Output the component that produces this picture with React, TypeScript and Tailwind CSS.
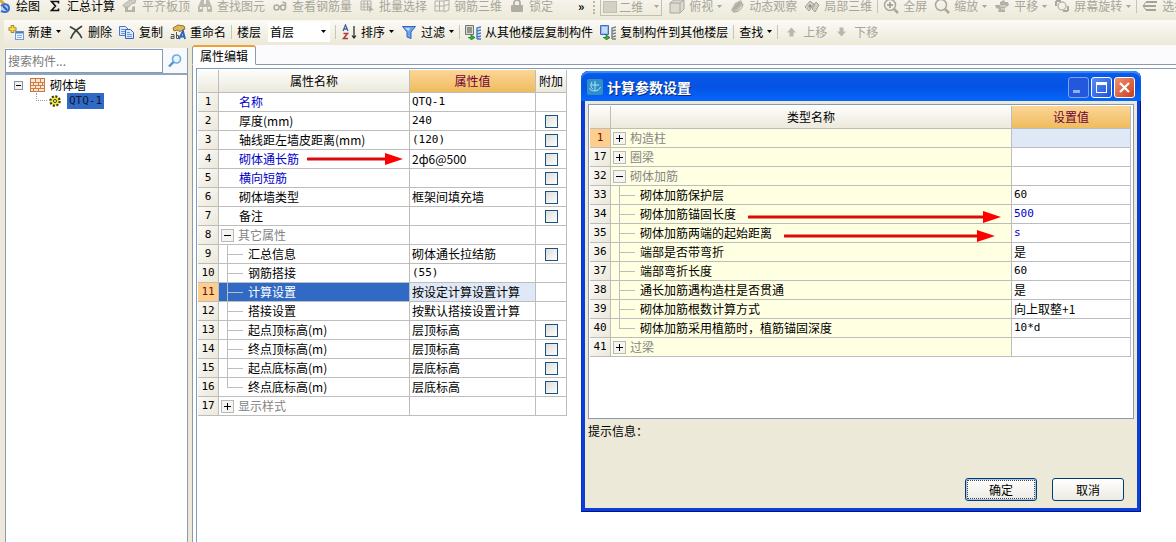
import { useState, type ReactNode } from 'react'
import clsx from 'clsx'

/* ---------- Types & data ---------- */

type PropertyRow = {
  no: number
  label: string
  value?: string
  tone?: 'link' | 'group'
  toggle?: 'open' | 'closed'
  branch?: 'mid' | 'last'
  check?: boolean
  selected?: boolean
  arrow?: number
}

const PROPERTIES: PropertyRow[] = [
  { no: 1, label: '名称', value: 'QTQ-1', tone: 'link' },
  { no: 2, label: '厚度(mm)', value: '240', check: true },
  { no: 3, label: '轴线距左墙皮距离(mm)', value: '(120)', check: true },
  { no: 4, label: '砌体通长筋', value: '2ф6@500', tone: 'link', check: true, arrow: 96 },
  { no: 5, label: '横向短筋', tone: 'link', check: true },
  { no: 6, label: '砌体墙类型', value: '框架间填充墙', check: true },
  { no: 7, label: '备注', check: true },
  { no: 8, label: '其它属性', tone: 'group', toggle: 'open' },
  { no: 9, label: '汇总信息', value: '砌体通长拉结筋', branch: 'mid', check: true },
  { no: 10, label: '钢筋搭接', value: '(55)', branch: 'mid' },
  { no: 11, label: '计算设置', value: '按设定计算设置计算', branch: 'mid', selected: true },
  { no: 12, label: '搭接设置', value: '按默认搭接设置计算', branch: 'mid' },
  { no: 13, label: '起点顶标高(m)', value: '层顶标高', branch: 'mid', check: true },
  { no: 14, label: '终点顶标高(m)', value: '层顶标高', branch: 'mid', check: true },
  { no: 15, label: '起点底标高(m)', value: '层底标高', branch: 'mid', check: true },
  { no: 16, label: '终点底标高(m)', value: '层底标高', branch: 'last', check: true },
  { no: 17, label: '显示样式', tone: 'group', toggle: 'closed' },
]

type ParamRow = Omit<PropertyRow, 'check'> & { changed?: boolean }

const PARAMS: ParamRow[] = [
  { no: 1, label: '构造柱', tone: 'group', toggle: 'closed', selected: true },
  { no: 17, label: '圈梁', tone: 'group', toggle: 'closed' },
  { no: 32, label: '砌体加筋', tone: 'group', toggle: 'open' },
  { no: 33, label: '砌体加筋保护层', value: '60', branch: 'mid' },
  { no: 34, label: '砌体加筋锚固长度', value: '500', branch: 'mid', changed: true, arrow: 253 },
  { no: 35, label: '砌体加筋两端的起始距离', value: 's', branch: 'mid', changed: true, arrow: 211 },
  { no: 36, label: '端部是否带弯折', value: '是', branch: 'mid' },
  { no: 37, label: '端部弯折长度', value: '60', branch: 'mid' },
  { no: 38, label: '通长加筋遇构造柱是否贯通', value: '是', branch: 'mid' },
  { no: 39, label: '砌体加筋根数计算方式', value: '向上取整+1', branch: 'mid' },
  { no: 40, label: '砌体加筋采用植筋时，植筋锚固深度', value: '10*d', branch: 'last' },
  { no: 41, label: '过梁', tone: 'group', toggle: 'closed' },
]

// plain ASCII values use the narrow fixed-width face
const isAscii = (s: string) => /^[\x20-\x7e]*$/.test(s)
const MONO = "font-['DejaVu_Sans_Mono',monospace] text-[11px]"

/* ---------- Icons ---------- */

function Icon({ children, className }: { children: ReactNode; className?: string }) {
  return (
    <svg viewBox="0 0 16 16" aria-hidden="true" className={clsx('size-4 shrink-0', className)} fill="none">
      {children}
    </svg>
  )
}

const DrawIcon = () => (
  <Icon>
    <path d="M4 2l7 7" stroke="#d9ab3a" strokeWidth="3" />
    <path d="M5 8c3-3 8-2 8 2s-4 5-8 3" fill="#b9d2f5" stroke="#3a6fc9" strokeWidth="2" />
    <path d="M7 8l4 4" stroke="#2d58a8" strokeWidth="2" />
  </Icon>
)
const SumIcon = () => (
  <Icon>
    <path d="M11.500 5.500V3.500H4.500L8.500 8l-4 4.500h7V10.500" stroke="#111" strokeWidth="1.600" />
  </Icon>
)
const SlabIcon = () => (
  <Icon>
    <path d="M1 7l7-5 6-1-1 4-4 1-2 3H2z" fill="#cfcdc3" stroke="#b5b3a8" />
    <path d="M3 9v5h10V8l-3 1v3H6V9z" fill="#b5b3a8" />
  </Icon>
)
const BinocularsIcon = () => (
  <Icon>
    <path d="M4 2h3v4h2V2h3l3 7v5h-5V9H6v5H1V9z" fill="#bdbbb0" />
    <path d="M3 10h2M11 10h2" stroke="#f5f3ea" strokeWidth="2" />
  </Icon>
)
const GlassesIcon = () => (
  <Icon>
    <circle cx="4.500" cy="9.500" r="2.500" stroke="#adaba0" strokeWidth="1.500" />
    <circle cx="11" cy="9.500" r="2.500" stroke="#adaba0" strokeWidth="1.500" />
    <path d="M7 9h2M13.500 9V5l-3-1" stroke="#adaba0" strokeWidth="1.500" />
  </Icon>
)
const BatchIcon = () => (
  <Icon>
    <path d="M2 3h10v9H2zM2 6h10M2 9h10M5 3v9M8.500 3v9" stroke="#b3b1a6" />
    <path d="M9 7l6 5-3 .5L11 15z" fill="#b3b1a6" />
  </Icon>
)
const RebarIcon = () => (
  <Icon>
    <path d="M1 3h9v10H1zM5.500 3v10M1 8h9M10 3l5-1v10l-5 2M10 8l5-2" stroke="#b3b1a6" />
  </Icon>
)
const LockIcon = () => (
  <Icon>
    <path d="M5 8V5a3 3 0 0 1 6 0v3" stroke="#b0aea4" strokeWidth="1.800" />
    <rect x="2" y="7" width="12" height="7" rx="1" fill="#b0aea4" />
  </Icon>
)
const CubeIcon = () => (
  <Icon>
    <path d="M1 5l4-3h10v9l-4 4H1z" fill="#dddbd0" stroke="#a9a79c" />
    <path d="M1 5h10v10M11 5l4-3" stroke="#a9a79c" />
  </Icon>
)
const OrbitIcon = () => (
  <Icon>
    <path d="M2 12L6 5l6-3 2 4-5 6-5 2z" fill="#b9b7ac" />
    <path d="M5 11l6-6M4 14c6 0 9-3 10-8" stroke="#9f9d92" />
  </Icon>
)
const PartialIcon = () => (
  <Icon>
    <path d="M1 9l5-6 4 3-5 7zM8 11l4-7 3 3-4 7z" fill="#d0cec3" stroke="#a3a196" />
    <circle cx="6" cy="8" r="1.500" fill="#8f8d82" />
  </Icon>
)
const ZoomIcon = ({ cross }: { cross?: boolean }) => (
  <Icon>
    <circle cx="7" cy="7" r="5.500" stroke="#aba99e" strokeWidth="1.500" />
    <path d="M11 11l4 4" stroke="#aba99e" strokeWidth="2.500" />
    {cross && <path d="M7 4v6M4 7h6" stroke="#99978c" strokeWidth="1.500" />}
  </Icon>
)
const PanIcon = () => (
  <Icon>
    <path d="M1 7h5V4l4-2 1 2h3l1 3-4 3v4H4l1-3-3-1z" fill="#b3b1a6" />
    <path d="M6 8h6M7 11h4" stroke="#e6e4da" />
  </Icon>
)
const RotateIcon = () => (
  <Icon>
    <path d="M2 3h5M2 3v5M14 13H9M14 13V8" stroke="#aba99e" strokeWidth="2" />
    <circle cx="8" cy="8" r="4" stroke="#bdbbb0" strokeWidth="1.500" />
  </Icon>
)
const ListIcon = () => (
  <Icon>
    <path d="M4 4h11M1 8h13M4 12h10" stroke="#a5a398" strokeWidth="2" />
    <path d="M4 4L1 8l3 4" stroke="#a5a398" />
  </Icon>
)
const NewIcon = () => (
  <Icon>
    <path d="M4.500 1v8M.5 5h8" stroke="#a8821a" strokeWidth="3.500" />
    <path d="M4.500 2v6M1.500 5h6" stroke="#f6dd4f" strokeWidth="1.800" />
    <rect x="7.500" y="7.500" width="8" height="8" fill="#eaf2ff" stroke="#6f97da" />
    <path d="M8 8.500h7" stroke="#4f7ac4" strokeWidth="2" />
    <path d="M9 11.500h5M9 13.500h5" stroke="#8fb1e8" />
  </Icon>
)
const DeleteIcon = () => (
  <Icon>
    <path d="M2.500 3c4 2 9 6 11 10.500M13.500 2.500C9 5 5 9 3 14" stroke="#3d3d3d" strokeWidth="1.700" strokeLinecap="round" />
  </Icon>
)
const CopyIcon = () => (
  <Icon>
    <path d="M.5 2.500h6l3 3v6h-9z" fill="#dce9fc" stroke="#4a78c4" />
    <path d="M2 5.500h4M2 7.500h4M2 9.500h4" stroke="#6d96d8" />
    <path d="M6.500 5.500h5l3 3v6h-8z" fill="#dce9fc" stroke="#3563b3" />
    <path d="M8 8.500h3M8 10.500h5M8 12.500h5" stroke="#6d96d8" />
  </Icon>
)
const RenameIcon = () => (
  <Icon>
    <path d="M3 4l5-3 6 1 1 3-5 2.500-3-1.500-3 1z" fill="#e2b857" stroke="#94713a" />
    <path d="M1 10.500h3v4H1v-2h3M6.500 8v6.500h2v-3h-2" stroke="#555" />
    <path d="M9 15l4-8 2 8M10.500 12.500h4" stroke="#2d62bd" strokeWidth="1.800" />
  </Icon>
)
const SortIcon = () => (
  <Icon>
    <path d="M2 7l2.500-6L7 7M3 5h3" stroke="#4262a8" strokeWidth="1.300" />
    <path d="M2.500 9.500h4l-4 5h4.500" stroke="#b03a3a" strokeWidth="1.500" />
    <path d="M13 2v12M11 11.500l2 2.500 2-2.500" stroke="#222" strokeWidth="1.200" />
  </Icon>
)
const FilterIcon = () => (
  <Icon>
    <path d="M1.500 2.500h13L10 8v6.500l-4-1.500V8z" fill="#6fa3ec" stroke="#3465b8" />
    <path d="M4 4h5L7.500 7z" fill="#c9defb" />
  </Icon>
)
const FloorCopyIcon = ({ flip }: { flip?: boolean }) => (
  <Icon>
    <path d="M.5 1.500h8v9h-8z" fill={flip ? '#8fb7ef' : '#d8d8d4'} stroke={flip ? '#3d6fbe' : '#77776f'} />
    <path d="M2 4h5M2 6h5M2 8h5" stroke={flip ? '#fff' : '#55554f'} />
    <path
      d="M16 3l-4 1v11M16 6l-4 1M16 9l-4 1M16 12l-4 1M16 15h-4"
      stroke={flip ? '#7a7f88' : '#3d7bd0'}
      strokeWidth="1.400"
    />
    <path d="M3 13.500h3V11l4 2.500-4 2.500" fill="#3fa846" stroke="#2d8a35" />
  </Icon>
)
const MoveIcon = ({ down }: { down?: boolean }) => (
  <Icon className={down ? 'rotate-180' : undefined}>
    <path d="M8.500 3.500l4.500 5h-2.500v4h-4v-4H4z" fill="#bab8ad" />
  </Icon>
)
const SearchIcon = () => (
  <Icon>
    <circle cx="9.500" cy="6" r="4" fill="#eaf5ff" stroke="#72aee0" strokeWidth="1.700" />
    <path d="M6.500 9L2 13.500" stroke="#4f93d0" strokeWidth="2.400" />
  </Icon>
)
const BrickIcon = () => (
  <Icon>
    <rect x="0.500" y="1.500" width="14" height="13" fill="#fbe6d2" stroke="#c8763f" />
    <path d="M0 5.500h15M0 8.500h15M0 11.500h15M5.500 2v3M10.500 2v3M3.500 6v3M8.500 6v3M12.500 6v3M5.500 9v3M10.500 9v3M3.500 12v3M8.500 12v3" stroke="#cf7c48" />
  </Icon>
)
const GearIcon = () => (
  <Icon>
    <circle cx="8" cy="8" r="4.500" fill="#f3e82c" stroke="#3b3a10" strokeWidth="2.500" strokeDasharray="2 1.500" />
    <circle cx="8" cy="8" r="3.500" fill="#f3e82c" />
    <circle cx="8" cy="8" r="1.500" fill="#fff" stroke="#3b3a10" />
  </Icon>
)
const AppIcon = () => (
  <Icon>
    <rect width="16" height="16" rx="2" fill="#2f8fc6" />
    <path d="M8 2v10M4 6h8M2.500 9c0 3 9 5 11-1M5 3C3 6 4 9 6 10" stroke="#a9e4f5" />
  </Icon>
)

const Caret = () => (
  <svg viewBox="0 0 5 3" aria-hidden="true" className="ml-1 h-[3px] w-[5px] shrink-0">
    <path d="M0 0h5L2.500 3z" fill="currentColor" />
  </svg>
)

/** Red annotation arrow; the width is the length of the whole arrow. */
function RedArrow({ length, low }: { length: number; low?: boolean }) {
  return (
    <svg
      viewBox={`0 0 ${length} 12`}
      style={{ width: length }}
      aria-hidden="true"
      className={clsx('h-3 shrink-0', low ? 'ml-3 self-end' : 'ml-2')}
    >
      <path d={`M1 6H${length - 16}`} stroke="#dc0a0a" strokeWidth="3" strokeLinecap="round" />
      <path d={`M${length - 18} 0L${length} 6L${length - 18} 12z`} fill="#ff0000" />
    </svg>
  )
}

/* ---------- Toolbar ---------- */

type ToolProps = { icon?: ReactNode; label: string; caret?: boolean; disabled?: boolean }

function Tool({ icon, label, caret, disabled }: ToolProps) {
  return (
    <button
      type="button"
      disabled={disabled}
      className="flex h-3 shrink-0 items-center leading-3 text-black disabled:text-[#a7a598]"
    >
      {icon}
      <span className={clsx('whitespace-nowrap', icon && 'ml-1')}>{label}</span>
      {caret && <Caret />}
    </button>
  )
}

const Divider = () => <span className="-mx-0.5 h-3.5 w-px shrink-0 bg-[#c9c5b4]" />

function ViewToolbar() {
  return (
    <div className="h-5 shrink-0 overflow-hidden bg-linear-to-b from-[#f6f4ec] to-[#ece9d8]">
      <div className="-ml-1 flex h-3 items-center gap-[7px]">
        <Tool icon={<DrawIcon />} label="绘图" />
        <Tool icon={<SumIcon />} label="汇总计算" />
        <Tool icon={<SlabIcon />} label="平齐板顶" disabled />
        <Tool icon={<BinocularsIcon />} label="查找图元" disabled />
        <Tool icon={<GlassesIcon />} label="查看钢筋量" disabled />
        <Tool icon={<BatchIcon />} label="批量选择" disabled />
        <Tool icon={<RebarIcon />} label="钢筋三维" disabled />
        <Tool icon={<LockIcon />} label="锁定" disabled />
        <button type="button" aria-label="更多" className="ml-4 w-2.5 shrink-0 self-start leading-3 font-bold">
          »
        </button>
        <span className="h-4 shrink-0 border-l-2 border-dotted border-[#b9b6a6]" />
        <div className="-ml-0.5 flex h-4 w-[62px] shrink-0 items-center self-start border border-t-0 border-[#c3c0b2] px-0.5 pb-0.5 text-[#a7a598]">
          <span className="h-3 w-3.5 shrink-0 border border-[#c3c0b2] bg-[#d3d1c6]" />
          <select disabled aria-label="视图" className="min-w-0 flex-1 appearance-none pl-0.5 leading-3">
            <option>二维</option>
          </select>
          <Caret />
        </div>
        <Tool icon={<CubeIcon />} label="俯视" caret disabled />
        <Tool icon={<OrbitIcon />} label="动态观察" disabled />
        <Tool icon={<PartialIcon />} label="局部三维" disabled />
        <Divider />
        <Tool icon={<ZoomIcon cross />} label="全屏" disabled />
        <Tool icon={<ZoomIcon />} label="缩放" caret disabled />
        <Tool icon={<PanIcon />} label="平移" caret disabled />
        <Tool icon={<RotateIcon />} label="屏幕旋转" caret disabled />
        <Divider />
        <Tool icon={<ListIcon />} label="选择" disabled />
      </div>
    </div>
  )
}

function ComponentToolbar() {
  return (
    <div className="ml-1 flex h-[25px] shrink-0 items-center gap-[7px] overflow-hidden bg-linear-to-b from-[#fbfaf6] to-[#ece9d8] pb-0.5 pl-1">
      <Tool icon={<NewIcon />} label="新建" caret />
      <Tool icon={<DeleteIcon />} label="删除" />
      <Tool icon={<CopyIcon />} label="复制" />
      <Tool icon={<RenameIcon />} label="重命名" />
      <Divider />
      <label htmlFor="floor" className="shrink-0 leading-3">
        楼层
      </label>
      <div className="flex h-5 w-[62px] shrink-0 items-center bg-white pr-1">
        <select id="floor" className="h-5 min-w-0 flex-1 appearance-none pl-0.5">
          <option>首层</option>
        </select>
        <Caret />
      </div>
      <Divider />
      <Tool icon={<SortIcon />} label="排序" caret />
      <Tool icon={<FilterIcon />} label="过滤" caret />
      <Divider />
      <Tool icon={<FloorCopyIcon />} label="从其他楼层复制构件" />
      <Tool icon={<FloorCopyIcon flip />} label="复制构件到其他楼层" />
      <Divider />
      <Tool label="查找" caret />
      <Divider />
      <Tool icon={<MoveIcon />} label="上移" disabled />
      <Tool icon={<MoveIcon down />} label="下移" disabled />
    </div>
  )
}

/* ---------- Component tree ---------- */

function ComponentTree() {
  return (
    <aside className="mt-[3px] ml-[5px] flex w-[183px] shrink-0 flex-col border-r border-[#8c9ab0] bg-white">
      <div className="flex h-[27px] items-center border-b-2 border-[#8fa5bd] bg-[#f8f9fb]">
        <input
          type="text"
          aria-label="搜索构件"
          placeholder="搜索构件..."
          className="h-6 min-w-0 flex-1 border border-[#7f9db9] bg-white px-0.5 placeholder:text-[#7b7b7b]"
        />
        <button type="button" aria-label="搜索" className="flex h-6 w-6 items-center justify-center">
          <SearchIcon />
        </button>
      </div>
      <ul className="flex-1 border-l border-[#8c9ab0] pt-0.5">
        <li>
          <div className="flex h-4 items-center pl-2">
            <button
              type="button"
              aria-label="折叠"
              className="flex size-[9px] items-center justify-center border border-[#8093ad] bg-[#f3f1ea]"
            >
              <span className="h-px w-[5px] bg-black" />
            </button>
            <span className="ml-[7px] flex">
              <BrickIcon />
            </span>
            <span className="ml-1">砌体墙</span>
          </div>
          <ul>
            <li className="flex h-4 items-center pl-[30px]">
              <span className="h-2 w-[11px] self-start border-b border-l border-dotted border-[#9a9a9a]" />
              <GearIcon />
              <span className={clsx('ml-1 flex h-4 items-center bg-[#316ac5] pr-0.5 pl-0.5 text-[#08183a]', MONO)}>
                QTQ-1
              </span>
            </li>
          </ul>
        </li>
      </ul>
    </aside>
  )
}

/* ---------- Grid pieces ---------- */

const HEAD = 'h-[23px] border-r border-b border-[#bdbdbd] p-0 font-normal'
const CELL = 'h-[19px] border-r border-b border-[#bdbdbd] p-0 leading-[18px]'
const PLAIN_HEAD = 'bg-linear-to-b from-[#fdfdfb] to-[#ece9dc]'
const ACTIVE_HEAD = 'bg-linear-to-b from-[#fbd696] to-[#efbb5c] text-[#700038]'

function RowNumber({ no, active }: { no: number; active?: boolean }) {
  return (
    <th
      scope="row"
      className={clsx(
        CELL,
        MONO,
        'text-center font-normal',
        active ? 'bg-[#fdce8c] text-[#6b1010]' : 'bg-linear-to-br from-[#fbfaf6] to-[#ebe8da]',
      )}
    >
      {no}
    </th>
  )
}

function NameContent({ row }: { row: ParamRow }) {
  return (
    <div className="flex h-[18px] items-center">
      {row.toggle && (
        <button
          type="button"
          aria-label={row.toggle === 'open' ? '折叠' : '展开'}
          className="ml-0.5 flex size-[13px] shrink-0 items-center justify-center border border-[#b9b9b9] bg-[#f4f4f2]"
        >
          <svg viewBox="0 0 7 7" className="size-[7px]" aria-hidden="true">
            <path d={row.toggle === 'open' ? 'M0 3.500h7' : 'M0 3.500h7M3.500 0v7'} stroke="#000" />
          </svg>
        </button>
      )}
      {row.branch && (
        <span className="ml-2 flex h-[19px] w-4 shrink-0 flex-col self-start">
          <span className="h-2.5 border-b border-l border-[#bdbdbd]" />
          {row.branch === 'mid' && <span className="flex-1 border-l border-[#bdbdbd]" />}
        </span>
      )}
      <span
        className={clsx(
          'shrink-0 whitespace-nowrap',
          row.toggle && 'ml-1',
          row.branch && 'ml-[5px]',
          !row.toggle && !row.branch && 'ml-5',
          row.tone === 'link' && 'text-[#0000c8]',
          row.tone === 'group' && 'text-[#858585]',
        )}
      >
        {row.label}
      </span>
      {row.arrow && <RedArrow length={row.arrow} low={row.changed} />}
    </div>
  )
}

function PropertyTable() {
  return (
    <table className="w-[369px] table-fixed border-separate border-spacing-0">
      <colgroup>
        <col className="w-[21px]" />
        <col className="w-[191px]" />
        <col className="w-[126px]" />
        <col className="w-[31px]" />
      </colgroup>
      <thead>
        <tr>
          <td className={clsx(HEAD, PLAIN_HEAD)} />
          <th scope="col" className={clsx(HEAD, PLAIN_HEAD)}>属性名称</th>
          <th scope="col" className={clsx(HEAD, ACTIVE_HEAD)}>属性值</th>
          <th scope="col" className={clsx(HEAD, PLAIN_HEAD)}>附加</th>
        </tr>
      </thead>
      <tbody>
        {PROPERTIES.map((row) => (
          <tr key={row.no}>
            <RowNumber no={row.no} active={row.selected} />
            <td className={clsx(CELL, row.selected && 'bg-[#316ac5] text-white')}>
              <NameContent row={row} />
            </td>
            <td className={clsx(CELL, 'pl-0.5 whitespace-nowrap', row.selected && 'bg-[#dfe8f6]')}>
              <span className={clsx('block', row.value && isAscii(row.value) && MONO)}>{row.value}</span>
            </td>
            <td className={CELL}>
              {row.check && (
                <input
                  type="checkbox"
                  aria-label={`附加 ${row.label}`}
                  className="mx-auto block size-[13px] appearance-none border border-[#1c5180] bg-linear-to-br from-[#dcdcd7] to-white"
                />
              )}
            </td>
          </tr>
        ))}
      </tbody>
    </table>
  )
}

/* ---------- Dialog ---------- */

const CAPTION = 'flex size-[21px] items-center justify-center rounded-[3px] border'

function ParamDialog({ onClose }: { onClose: () => void }) {
  return (
    <section
      role="dialog"
      aria-labelledby="dialog-title"
      className="absolute top-[71px] left-[581px] w-[560px] rounded-t-lg bg-[#0b3fd6] px-1 pb-1 shadow-[inset_-1px_-1px_0_#00138c,inset_1px_0_0_#0831d9]"
    >
      <header className="-mx-1 flex h-[30px] items-center gap-0.5 rounded-t-lg bg-linear-to-b from-[#0a5be8] via-[#0453e4] to-[#0566fb] px-1.5 pt-0.5 shadow-[inset_0_2px_1px_#3b8cff]">
        <AppIcon />
        <h2 id="dialog-title" className="flex-1 pl-0.5 text-[14px] font-bold text-white [text-shadow:1px_1px_0_#0a2a80]">
          计算参数设置
        </h2>
        <button type="button" aria-label="最小化" className={clsx(CAPTION, 'border-[#7fa3f0] bg-[#2358dc]')}>
          <span className="mt-2 mr-1 h-[3px] w-[7px] bg-[#8fb0f2]" />
        </button>
        <button type="button" aria-label="最大化" className={clsx(CAPTION, 'border-white bg-linear-to-br from-[#5b8df5] to-[#1c50d8]')}>
          <span className="size-[11px] border border-t-[3px] border-white" />
        </button>
        <button
          type="button"
          aria-label="关闭"
          onClick={onClose}
          className={clsx(CAPTION, 'border-white bg-linear-to-br from-[#f0906f] to-[#cc3a14]')}
        >
          <svg viewBox="0 0 11 11" className="size-[11px]" aria-hidden="true">
            <path d="M1 1l9 9M10 1l-9 9" stroke="#fff" strokeWidth="2.200" />
          </svg>
        </button>
      </header>

      <div className="flex flex-col bg-[#ece9d8] p-[3px]">
        <div className="min-h-[315px] border border-[#8c9ab0] bg-white p-px">
          <table className="w-[541px] table-fixed border-separate border-spacing-0">
            <colgroup>
              <col className="w-[21px]" />
              <col />
              <col className="w-[119px]" />
            </colgroup>
            <thead>
              <tr>
                <td className={clsx(HEAD, PLAIN_HEAD)} />
                <th scope="col" className={clsx(HEAD, PLAIN_HEAD)}>类型名称</th>
                <th scope="col" className={clsx(HEAD, ACTIVE_HEAD)}>设置值</th>
              </tr>
            </thead>
            <tbody>
              {PARAMS.map((row) => (
                <tr key={row.no}>
                  <RowNumber no={row.no} active={row.selected} />
                  <td className={clsx(CELL, 'bg-[#ffffe1]')}>
                    <NameContent row={row} />
                  </td>
                  <td
                    className={clsx(
                      CELL,
                      'pl-0.5 whitespace-nowrap',
                      row.selected && 'bg-[#dfe8f6]',
                      row.changed && 'text-[#0000c8]',
                    )}
                  >
                    <span className={clsx('block', row.value && isAscii(row.value) && MONO)}>{row.value}</span>
                  </td>
                </tr>
              ))}
            </tbody>
          </table>
        </div>
        <p className="mt-1 h-[55px] leading-4">提示信息：</p>
        <footer className="flex justify-end gap-[15px] pr-2.5 pb-1">
          <button
            type="button"
            onClick={onClose}
            className="h-[23px] w-[72px] rounded-[3px] border border-[#003c74] bg-linear-to-b from-white to-[#eceae2] p-px shadow-[inset_0_0_0_1px_#a9c1ec]"
          >
            <span className="flex h-full items-center justify-center border border-dotted border-[#444]">确定</span>
          </button>
          <button
            type="button"
            onClick={onClose}
            className="h-[23px] w-[72px] rounded-[3px] border border-[#003c74] bg-linear-to-b from-white to-[#eceae2]"
          >
            取消
          </button>
        </footer>
      </div>
    </section>
  )
}

/* ---------- Page ---------- */

export default function App() {
  const [dialogOpen, setDialogOpen] = useState(true)

  return (
    <div className="relative flex h-screen flex-col overflow-hidden bg-[#ece9d8] font-['Noto_Sans_CJK_SC',sans-serif] text-[12px] leading-4 text-black">
      <ViewToolbar />
      <ComponentToolbar />
      <div className="flex min-h-0 flex-1">
        <ComponentTree />
        <main className="ml-1 flex min-w-0 flex-1 flex-col">
          <div role="tablist" className="flex h-5 items-end border-b border-[#8c9ab0] bg-[#fbfbfd]">
            <button
              type="button"
              role="tab"
              aria-selected="true"
              className="-mb-px h-5 w-16 rounded-t-[3px] border border-t-2 border-[#8c9ab0] border-t-[#f0a030] border-b-white bg-white leading-4"
            >
              属性编辑
            </button>
          </div>
          <div role="tabpanel" className="flex-1 border-l border-[#8c9ab0] bg-white pt-[3px] pl-[3px]">
            <div className="h-full border-t border-l border-[#7f9db9] pt-px pl-px">
              <PropertyTable />
            </div>
          </div>
        </main>
      </div>
      {dialogOpen && <ParamDialog onClose={() => setDialogOpen(false)} />}
    </div>
  )
}
